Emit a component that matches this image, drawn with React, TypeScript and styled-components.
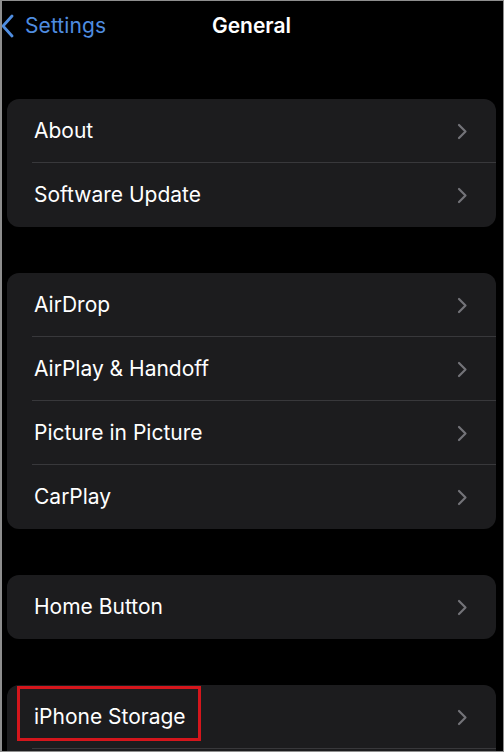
import React from "react";
import styled, { createGlobalStyle } from "styled-components";

const Global = createGlobalStyle`
  html, body { margin: 0; padding: 0; background: #000; }
  body { font-family: Inter, "Noto Sans", sans-serif; -webkit-font-smoothing: antialiased; }
`;

const Frame = styled.div`
  width: 504px;
  height: 752px;
  box-sizing: border-box;
  border: 1px solid #8e8e8e;
  border-left-width: 2px;
  background: #000;
  overflow: hidden;
  display: flex;
  flex-direction: column;
`;

const NavBar = styled.div`
  position: relative;
  flex-shrink: 0;
  height: 48px;
  display: flex;
  align-items: center;
  justify-content: center;
`;

const BackButton = styled.div`
  position: absolute;
  left: -1px;
  top: 12px;
  display: flex;
  align-items: center;
  gap: 10px;
  color: #4f8de0;
  font-size: 21px;
  letter-spacing: 0.1px;
`;

const Title = styled.div`
  color: #fff;
  font-size: 21px;
  font-weight: 600;
  margin-left: -2px;
`;

const List = styled.div`
  display: flex;
  flex-direction: column;
  gap: 46px;
  padding: 50px 7px 0 5px;
`;

const Card = styled.div<{ $continues?: boolean }>`
  flex-shrink: 0;
  background: #1c1c1e;
  border-radius: 12px;
  display: flex;
  flex-direction: column;
  padding-bottom: ${(p) => (p.$continues ? "24px" : "0")};
`;

const Row = styled.div<{ $sep: boolean }>`
  position: relative;
  height: 64px;
  display: flex;
  align-items: center;
  justify-content: space-between;
  padding: 0 28px 0 27px;
  &::after {
    content: "";
    display: ${(p) => (p.$sep ? "block" : "none")};
    position: absolute;
    left: 25px;
    right: 0;
    bottom: 0;
    height: 1px;
    background: #38383b;
  }
`;

const Label = styled.span`
  color: #fff;
  font-size: 21px;
  letter-spacing: 0;
  margin-top: -1px;
`;

const Highlight = styled.div`
  position: absolute;
  left: 10px;
  top: 1px;
  width: 184px;
  height: 55px;
  box-sizing: border-box;
  border: 3px solid #d4161c;
`;

const Chevron = () => (
  <svg width="11" height="17" viewBox="0 0 11 17">
    <path d="M2 2 L8.5 8.5 L2 15" fill="none" stroke="#737378" strokeWidth="2.2" strokeLinecap="round" strokeLinejoin="round" />
  </svg>
);

const BackChevron = () => (
  <svg width="14" height="24" viewBox="0 0 14 24">
    <path d="M11 2 L2 12 L11 22" fill="none" stroke="#4f8de0" strokeWidth="2.8" strokeLinecap="round" strokeLinejoin="round" />
  </svg>
);

type Item = { label: string; highlight?: boolean; sep?: boolean };

const groups: Item[][] = [
  [{ label: "About" }, { label: "Software Update" }],
  [{ label: "AirDrop" }, { label: "AirPlay & Handoff" }, { label: "Picture in Picture" }, { label: "CarPlay" }],
  [{ label: "Home Button" }],
  [{ label: "iPhone Storage", highlight: true, sep: true }],
];

export default function App() {
  return (
    <>
      <Global />
      <Frame>
        <NavBar>
          <BackButton>
            <BackChevron />
            <span>Settings</span>
          </BackButton>
          <Title>General</Title>
        </NavBar>
        <List>
          {groups.map((g, gi) => (
            <Card key={gi} $continues={gi === groups.length - 1}>
              {g.map((it, i) => (
                <Row key={it.label} $sep={it.sep ?? i < g.length - 1}>
                  <Label>{it.label}</Label>
                  <Chevron />
                  {it.highlight && <Highlight />}
                </Row>
              ))}
            </Card>
          ))}
        </List>
      </Frame>
    </>
  );
}
